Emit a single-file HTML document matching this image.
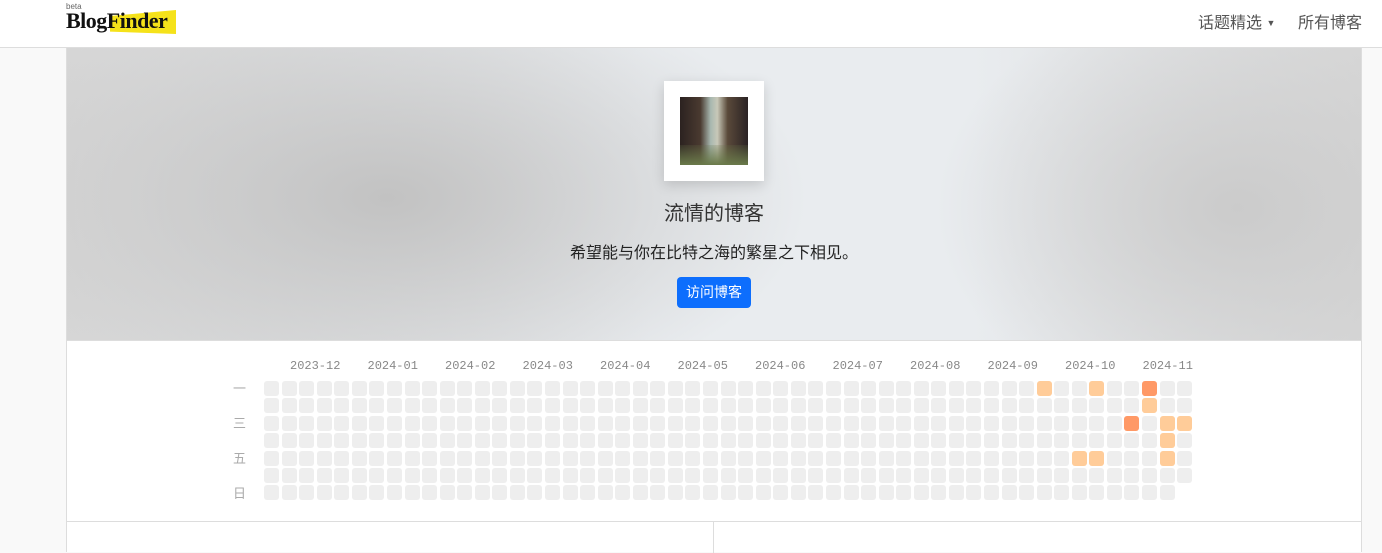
<!DOCTYPE html>
<html><head><meta charset="utf-8"><style>
*{box-sizing:border-box;margin:0;padding:0}
body{width:1382px;height:552px;overflow:hidden;background:#f9f9f9;font-family:"Liberation Sans","Noto Sans CJK SC",sans-serif;position:relative}
.nav{position:absolute;left:0;top:0;width:1382px;height:48px;background:#fff;border-bottom:1px solid #ddd}
.logo{position:absolute;left:66px;top:2px}
.logo .b{position:absolute;left:0;top:0;font-size:8px;color:#666}
.logo .t{position:absolute;left:0;top:6px;font-family:"Liberation Serif",serif;font-weight:bold;font-size:22px;color:#111;letter-spacing:-0.5px;white-space:nowrap}
.hl{position:absolute;left:44px;top:8px;width:66px;height:24px;background:#f5e21a;clip-path:polygon(0 25%,100% 0,100% 100%,0 90%)}
.nl{position:absolute;top:10px;font-size:16px;color:#555}
.wrap{position:absolute;left:66px;top:48px;width:1296px;height:504px;border-left:1px solid #ddd;border-right:1px solid #ddd;background:#fff}
.hero{position:absolute;left:0;top:0;width:1294px;height:293px;border-bottom:1px solid #ddd;
background:radial-gradient(ellipse 420px 220px at 320px 150px,#c2c2c2,rgba(200,200,200,0) 100%),radial-gradient(ellipse 300px 220px at 1170px 160px,#cbcbcb,rgba(210,210,210,0) 100%),linear-gradient(90deg,#d6d6d6,#e9ecef 45%,#e9ecef 70%,#d8d8d8)}
.av{position:absolute;left:597px;top:33px;width:100px;height:100px;background:#fff;box-shadow:0 4px 12px rgba(0,0,0,.15)}
.img{position:absolute;left:16px;top:16px;width:68px;height:68px;background:linear-gradient(90deg,#2b2220 0%,#4a3a30 30%,#a8b8b0 45%,#c8c8b8 55%,#5a4a3a 70%,#2a2224 100%)}
.img:after{content:"";position:absolute;left:0;bottom:0;width:100%;height:30%;background:linear-gradient(0deg,#6a7a4a,rgba(100,110,70,.2))}
.title{position:absolute;left:0;width:1294px;top:149px;text-align:center;font-size:20px;color:#333}
.sub{position:absolute;left:0;width:1294px;top:191px;text-align:center;font-size:16px;color:#222}
.btn{position:absolute;left:610px;top:229px;width:74px;height:31px;background:#0d6efd;border-radius:4px;color:#fff;font-size:14px;text-align:center;line-height:31px}
.m{position:absolute;top:311px;font-family:"Liberation Mono","Noto Sans CJK SC",monospace;font-size:12px;color:#888}
.d{position:absolute;left:166px;font-size:13px;color:#aaa}
.c{position:absolute;width:15px;height:15px;border-radius:3px;background:#eee}
.bot{position:absolute;left:0;top:473px;width:1294px;height:31px;border-top:1px solid #ddd}
.bot div{position:absolute;left:646px;top:0;width:1px;height:31px;background:#ddd}
</style></head><body>
<div class="nav">
 <div class="logo"><span class="b">beta</span><div class="hl"></div><span class="t">BlogFinder</span></div>
 <span class="nl" style="left:1198px;top:9px">话题精选 <span style="font-size:9px;vertical-align:2px">▼</span></span>
 <span class="nl" style="left:1298px;top:9px">所有博客</span>
</div>
<div class="wrap">
 <div class="hero">
  <div class="av"><div class="img"></div></div>
  <div class="title">流情的博客</div>
  <div class="sub">希望能与你在比特之海的繁星之下相见。</div>
  <div class="btn">访问博客</div>
 </div>
 <div id="g"></div>
 <span class="d" style="top:330px">一</span>
 <span class="d" style="top:365px">三</span>
 <span class="d" style="top:400px">五</span>
 <span class="d" style="top:435px">日</span>
 <div class="bot"><div></div></div>
</div>
<script>
var g=document.getElementById('g'),h='';
var ms=['2023-12','2024-01','2024-02','2024-03','2024-04','2024-05','2024-06','2024-07','2024-08','2024-09','2024-10','2024-11'];
for(var i=0;i<ms.length;i++)h+='<span class="m" style="left:'+(223+i*77.5)+'px">'+ms[i]+'</span>';
var L='#ffcc99',D='#ff9966';
var sp={'44,0':L,'47,0':L,'50,0':D,'50,1':L,'49,2':D,'51,2':L,'52,2':L,'51,3':L,'46,4':L,'47,4':L,'51,4':L};
for(var c=0;c<53;c++)for(var r=0;r<7;r++){if(c==52&&r==6)continue;
var col=sp[c+','+r]||'#eee';
h+='<div class="c" style="left:'+(197+c*17.56).toFixed(1)+'px;top:'+(333+r*17.4)+'px;background:'+col+'"></div>';}
g.innerHTML=h;
</script>
</body></html>
